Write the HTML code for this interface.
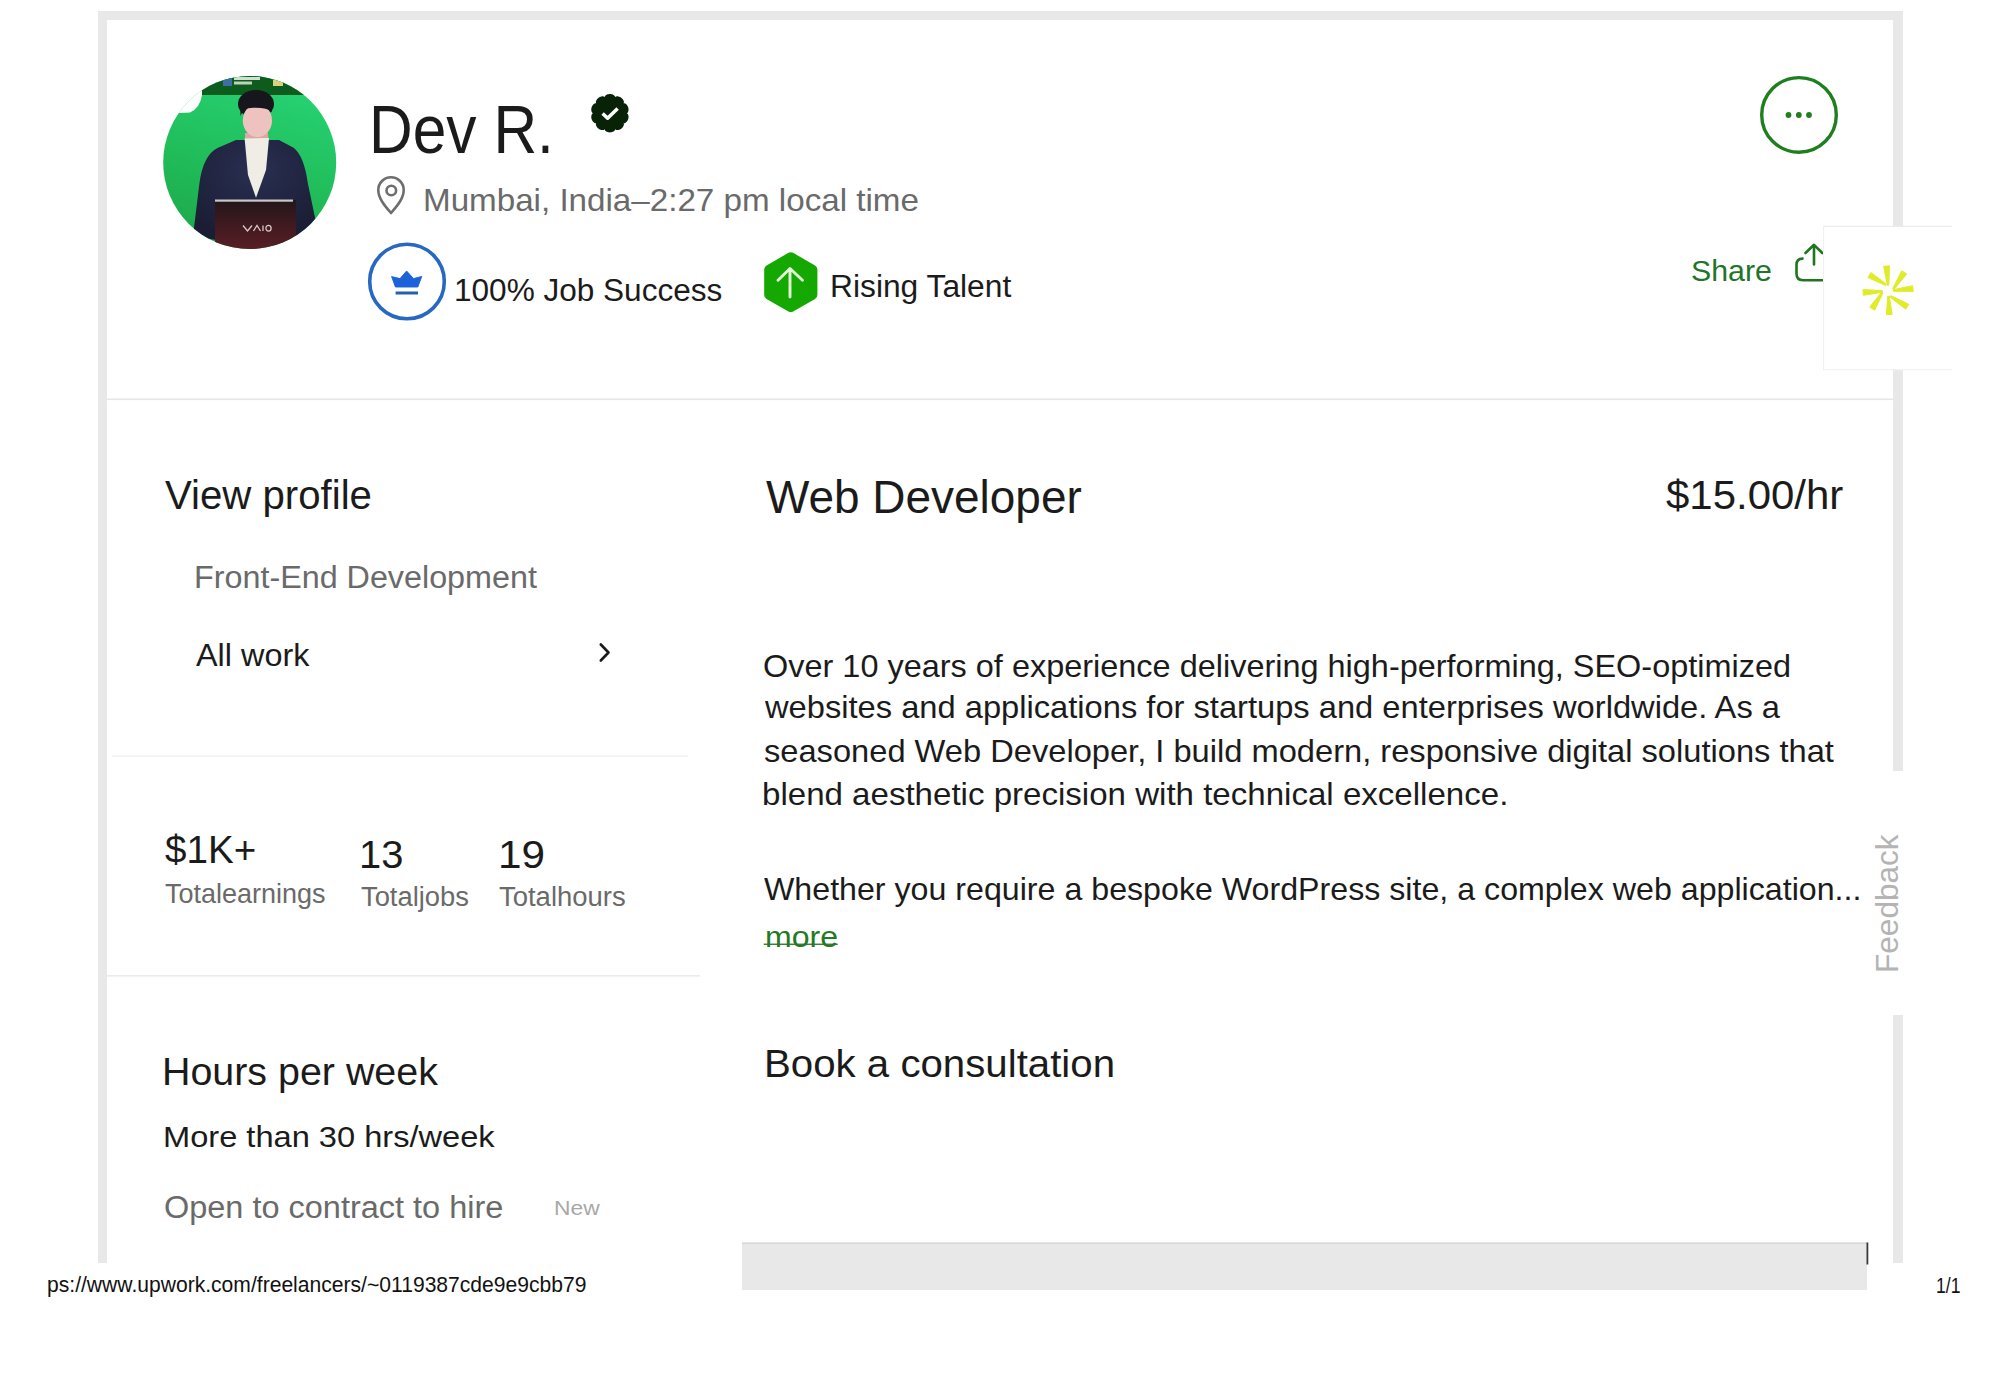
<!DOCTYPE html>
<html><head><meta charset="utf-8"><title>Dev R. - Upwork</title>
<style>
html,body{margin:0;padding:0;background:#fff;}
body{width:2000px;height:1380px;position:relative;overflow:hidden;font-family:"Liberation Sans",sans-serif;}
.t{position:absolute;white-space:pre;line-height:1;transform-origin:0 0;font-family:"Liberation Sans",sans-serif;}
svg.bg{position:absolute;left:0;top:0;}
</style></head><body>
<svg class="bg" width="2000" height="1380" viewBox="0 0 2000 1380">
<defs>
<clipPath id="av"><circle cx="249.7" cy="162.5" r="86.5"/></clipPath>
<linearGradient id="gg" x1="0.3" y1="0" x2="0" y2="1"><stop offset="0" stop-color="#26d070"/><stop offset="0.5" stop-color="#20bb58"/><stop offset="1" stop-color="#1ca248"/></linearGradient>
<linearGradient id="lap" x1="0" y1="0" x2="0" y2="1"><stop offset="0" stop-color="#23161a"/><stop offset="1" stop-color="#5c1f26"/></linearGradient>
<radialGradient id="suit" cx="0.5" cy="0.3" r="0.7"><stop offset="0" stop-color="#2a2f52"/><stop offset="1" stop-color="#1a1d34"/></radialGradient>
</defs>
<!-- frame -->
<rect x="98" y="11" width="1805" height="9" fill="#e8e8e8"/>
<rect x="98" y="11" width="9" height="1252" fill="#e8e8e8"/>
<rect x="1893" y="11" width="10" height="760" fill="#e8e8e8"/>
<rect x="1893" y="1015" width="10" height="248" fill="#e8e8e8"/>
<!-- dividers -->
<rect x="107" y="398.5" width="1786" height="1.6" fill="#e6e6e6"/>
<rect x="112" y="755.5" width="576" height="1.3" fill="#f0f0f0"/>
<rect x="107" y="975" width="593" height="1.6" fill="#ebebeb"/>
<!-- avatar -->
<g clip-path="url(#av)">
<rect x="160" y="70" width="180" height="185" fill="url(#gg)"/>
<path d="M202,95 L202,89 L219,78 L300,78 L312,95 Z" fill="#0d5c1e"/>
<rect x="160" y="70" width="180" height="8.5" fill="#0d5c1e"/>
<rect x="223" y="76" width="9" height="10" fill="#3d6ea6"/>
<rect x="234" y="77" width="26" height="3" fill="#cfe0cf"/>
<rect x="234" y="81.5" width="18" height="3" fill="#bcd2bc"/>
<rect x="273" y="79" width="10" height="7" fill="#d9d27c"/>
<path d="M158,68 L202,68 L202,95 Q200,108 190,112.5 L158,114 Z" fill="#fff"/>
<path d="M245,133 L268,133 L269,146 L245,146 Z" fill="#d9a9a2"/>
<ellipse cx="256" cy="104" rx="18" ry="14" fill="#17161d"/>
<ellipse cx="257.4" cy="120.5" rx="14.6" ry="16.5" fill="#eec3bf"/>
<path d="M240.5,116 Q242.5,107.5 254,107.8 Q267,107.5 271.8,112 L272.5,100 L240,100 Z" fill="#17161d"/>
<path d="M236,140 L218,147.8 Q203,155 199.4,183.6 L193,236 L216,240 L216,200.5 L293,200.5 L296,240 L318,232 L307.8,183 Q304,156 293.6,147.8 L279,140 Z" fill="url(#suit)"/>
<path d="M244.6,138.4 L269,138 L266,170 L256,197.8 L248,175 Z" fill="#efede6"/>
<rect x="215" y="200" width="81" height="52" fill="url(#lap)"/>
<rect x="215" y="199.5" width="78" height="2.2" fill="#c8c8c8"/>
<path d="M243,225.5 L247.5,231 L252,225.5 M253.5,231 L257,225.5 L260.5,231 M263,225.5 L263,231 M268.5,228.2 m-2.6,0 a2.6,2.9 0 1 0 5.2,0 a2.6,2.9 0 1 0 -5.2,0" stroke="#d8c8c8" stroke-width="1.3" fill="none"/>
</g>
<!-- verified badge -->
<path d="M626.90,113.20 L627.78,113.90 L628.14,114.64 L628.36,115.39 L628.49,116.14 L628.52,116.90 L628.48,117.66 L628.36,118.41 L628.16,119.13 L627.89,119.84 L627.55,120.51 L627.14,121.15 L626.67,121.74 L626.12,122.28 L625.50,122.76 L624.78,123.14 L623.65,123.19 L623.95,124.28 L623.81,125.08 L623.55,125.82 L623.21,126.51 L622.79,127.14 L622.31,127.73 L621.77,128.26 L621.19,128.73 L620.55,129.14 L619.88,129.49 L619.18,129.77 L618.44,129.97 L617.68,130.08 L616.90,130.10 L616.09,129.99 L615.15,129.37 L614.76,130.42 L614.17,130.99 L613.53,131.44 L612.84,131.79 L612.13,132.06 L611.40,132.25 L610.65,132.36 L609.90,132.40 L609.15,132.36 L608.40,132.25 L607.67,132.06 L606.96,131.79 L606.27,131.44 L605.63,130.99 L605.04,130.42 L604.65,129.37 L603.71,129.99 L602.90,130.10 L602.12,130.08 L601.36,129.97 L600.62,129.77 L599.92,129.49 L599.25,129.14 L598.61,128.73 L598.03,128.26 L597.49,127.73 L597.01,127.14 L596.59,126.51 L596.25,125.82 L595.99,125.08 L595.85,124.28 L596.15,123.19 L595.02,123.14 L594.30,122.76 L593.68,122.28 L593.13,121.74 L592.66,121.15 L592.25,120.51 L591.91,119.84 L591.64,119.13 L591.44,118.41 L591.32,117.66 L591.28,116.90 L591.31,116.14 L591.44,115.39 L591.66,114.64 L592.02,113.90 L592.90,113.20 L592.02,112.50 L591.66,111.76 L591.44,111.01 L591.31,110.26 L591.28,109.50 L591.32,108.74 L591.44,107.99 L591.64,107.27 L591.91,106.56 L592.25,105.89 L592.66,105.25 L593.13,104.66 L593.68,104.12 L594.30,103.64 L595.02,103.26 L596.15,103.21 L595.85,102.12 L595.99,101.32 L596.25,100.58 L596.59,99.89 L597.01,99.26 L597.49,98.67 L598.03,98.14 L598.61,97.67 L599.25,97.26 L599.92,96.91 L600.62,96.63 L601.36,96.43 L602.12,96.32 L602.90,96.30 L603.71,96.41 L604.65,97.03 L605.04,95.98 L605.63,95.41 L606.27,94.96 L606.96,94.61 L607.67,94.34 L608.40,94.15 L609.15,94.04 L609.90,94.00 L610.65,94.04 L611.40,94.15 L612.13,94.34 L612.84,94.61 L613.53,94.96 L614.17,95.41 L614.76,95.98 L615.15,97.03 L616.09,96.41 L616.90,96.30 L617.68,96.32 L618.44,96.43 L619.18,96.63 L619.88,96.91 L620.55,97.26 L621.19,97.67 L621.77,98.14 L622.31,98.67 L622.79,99.26 L623.21,99.89 L623.55,100.58 L623.81,101.32 L623.95,102.12 L623.65,103.21 L624.78,103.26 L625.50,103.64 L626.12,104.12 L626.67,104.66 L627.14,105.25 L627.55,105.89 L627.89,106.56 L628.16,107.27 L628.36,107.99 L628.48,108.74 L628.52,109.50 L628.49,110.26 L628.36,111.01 L628.14,111.76 L627.78,112.50 Z" fill="#072207"/>
<path d="M602.6,113.4 L607.6,118.2 L617.6,108.4" stroke="#fff" stroke-width="3.5" fill="none" stroke-linecap="butt" stroke-linejoin="round"/>
<!-- pin -->
<path d="M391,213 C384,205 378.3,198 378.3,190 A12.7,12.7 0 0 1 403.7,190 C403.7,198 398,205 391,213 Z" stroke="#6e6e6e" stroke-width="2.6" fill="none" stroke-linejoin="round"/>
<circle cx="391.3" cy="190.5" r="4.8" stroke="#6e6e6e" stroke-width="2.6" fill="none"/>
<!-- job success -->
<circle cx="407" cy="281.5" r="37.3" stroke="#2668c2" stroke-width="3.6" fill="none"/>
<path d="M391.6,276.6 L395.4,287 L417.8,287 L421.8,276.4 L413.6,278.6 L406.6,271 L400,278.6 Z" fill="#1c62d8" stroke="#1c62d8" stroke-width="0.9" stroke-linejoin="round"/>
<rect x="395.6" y="291.5" width="22.4" height="3" fill="#2160ac"/>
<!-- rising talent -->
<path d="M790.80,256.90 L812.71,269.55 L812.71,294.85 L790.80,307.50 L768.89,294.85 L768.89,269.55 Z" fill="#14a800" stroke="#14a800" stroke-width="9.4" stroke-linejoin="round"/>
<path d="M790,297 L790,269 M778,280.3 L790,268.5 L802.5,280.3" stroke="#e2f9d8" stroke-width="2.9" fill="none" stroke-linecap="round" stroke-linejoin="round"/>
<!-- more button -->
<circle cx="1799" cy="114.9" r="37.3" stroke="#1f7f1f" stroke-width="3.4" fill="none"/>
<circle cx="1788.5" cy="115" r="2.9" fill="#1f7f1f"/>
<circle cx="1798.8" cy="115" r="2.9" fill="#1f7f1f"/>
<circle cx="1809" cy="115" r="2.9" fill="#1f7f1f"/>
<!-- share icon -->
<path d="M1802.5,258.6 Q1796.5,258.6 1796.5,265 L1796.5,273.8 Q1796.5,280.2 1803,280.2 L1822.5,280.2" stroke="#1f761f" stroke-width="2.6" fill="none" stroke-linecap="round"/>
<path d="M1814,264.5 L1814,245.5 M1805.5,253 L1814,244.8 L1822.3,253" stroke="#1f761f" stroke-width="2.6" fill="none" stroke-linecap="round" stroke-linejoin="round"/>
<!-- popup -->
<rect x="1823" y="226" width="129" height="144" fill="#fff"/>
<rect x="1823" y="225.8" width="129" height="1.2" fill="#ececec"/>
<rect x="1823" y="226" width="1.2" height="144" fill="#f1f1f1"/>
<rect x="1823" y="369" width="129" height="1.2" fill="#f3f3f3"/>
<path d="M1889.47,265.86 L1883.69,266.30 L1887.23,285.18 L1888.83,285.06 Z M1870.92,272.58 L1868.00,277.59 L1885.67,285.48 L1886.48,284.10 Z M1863.03,289.51 L1863.31,295.30 L1882.42,292.27 L1882.34,290.67 Z M1869.72,307.09 L1874.63,310.17 L1883.06,292.80 L1881.70,291.95 Z M1886.44,314.62 L1892.23,314.35 L1889.30,296.26 L1887.70,296.34 Z M1905.69,309.23 L1908.75,304.31 L1890.81,295.62 L1889.96,296.98 Z M1913.21,291.46 L1912.64,285.69 L1893.22,289.70 L1893.38,291.30 Z M1906.67,273.97 L1901.82,270.80 L1892.64,288.68 L1893.98,289.56 Z" fill="#e0ec28" stroke="#e0ec28" stroke-width="1" stroke-linejoin="round"/>
<!-- chevron -->
<path d="M600.8,644.5 L608.5,652.5 L600.8,660.5" stroke="#1b1b1b" stroke-width="2.6" fill="none" stroke-linecap="round" stroke-linejoin="round"/>
<!-- bottom bar -->
<rect x="742" y="1242.5" width="1125" height="47.5" fill="#e8e8e8"/>
<rect x="742" y="1242.5" width="1125" height="1.5" fill="#d8d8d8"/>
<rect x="1866.5" y="1242.5" width="1.8" height="22" fill="#3a3a3a"/>
<!-- more underline -->
<rect x="763.75" y="943.6" width="74" height="1.3" fill="#2d6e2d"/>
</svg>
<div class="t" style="left:369.34px;top:96.20px;font-size:67.83px;color:#1b1b1b;transform:scaleX(0.8920);">Dev R.</div>
<div class="t" style="left:422.90px;top:184.50px;font-size:31.59px;color:#6a6a6a;transform:scaleX(1.0503);">Mumbai, India–2:27 pm local time</div>
<div class="t" style="left:453.93px;top:275.00px;font-size:30.43px;color:#1b1b1b;transform:scaleX(1.0369);">100% Job Success</div>
<div class="t" style="left:830.01px;top:271.00px;font-size:31.88px;color:#1b1b1b;transform:scaleX(0.9965);">Rising Talent</div>
<div class="t" style="left:1690.69px;top:256.40px;font-size:30.00px;color:#21742a;transform:scaleX(1.0093);">Share</div>
<div class="t" style="left:164.50px;top:475.75px;font-size:40.22px;color:#1b1b1b;transform:scaleX(0.9989);">View profile</div>
<div class="t" style="left:193.97px;top:562.00px;font-size:31.88px;color:#6a6a6a;transform:scaleX(1.0133);">Front-End Development</div>
<div class="t" style="left:196.00px;top:641.25px;font-size:30.80px;color:#1b1b1b;transform:scaleX(1.0521);">All work</div>
<div class="t" style="left:165.00px;top:830.50px;font-size:38.04px;color:#1b1b1b;transform:scaleX(1.0150);">$1K+</div>
<div class="t" style="left:358.96px;top:835.00px;font-size:39.13px;color:#1b1b1b;transform:scaleX(1.0182);">13</div>
<div class="t" style="left:497.84px;top:835.00px;font-size:39.13px;color:#1b1b1b;transform:scaleX(1.0815);">19</div>
<div class="t" style="left:164.50px;top:878.50px;font-size:28.26px;color:#6a6a6a;transform:scaleX(0.9559);">Totalearnings</div>
<div class="t" style="left:360.50px;top:883.50px;font-size:26.81px;color:#6a6a6a;transform:scaleX(1.0203);">Totaljobs</div>
<div class="t" style="left:498.75px;top:883.50px;font-size:26.81px;color:#6a6a6a;transform:scaleX(1.0245);">Totalhours</div>
<div class="t" style="left:162.48px;top:1051.50px;font-size:39.13px;color:#1b1b1b;transform:scaleX(1.0067);">Hours per week</div>
<div class="t" style="left:163.33px;top:1122.00px;font-size:30.07px;color:#1b1b1b;transform:scaleX(1.0845);">More than 30 hrs/week</div>
<div class="t" style="left:164.48px;top:1191.50px;font-size:31.88px;color:#6a6a6a;transform:scaleX(1.0185);">Open to contract to hire</div>
<div class="t" style="left:554.41px;top:1196.50px;font-size:21.01px;color:#a8a8a8;transform:scaleX(1.0874);">New</div>
<div class="t" style="left:765.75px;top:474.40px;font-size:46.96px;color:#1b1b1b;transform:scaleX(0.9782);">Web Developer</div>
<div class="t" style="left:1665.80px;top:474.60px;font-size:40.00px;color:#1b1b1b;transform:scaleX(1.0492);">$15.00/hr</div>
<div class="t" style="left:763.36px;top:650.50px;font-size:31.16px;color:#1b1b1b;transform:scaleX(1.0415);">Over 10 years of experience delivering high-performing, SEO-optimized</div>
<div class="t" style="left:765.45px;top:692.10px;font-size:31.16px;color:#1b1b1b;transform:scaleX(1.0484);">websites and applications for startups and enterprises worldwide. As a</div>
<div class="t" style="left:764.40px;top:735.80px;font-size:31.16px;color:#1b1b1b;transform:scaleX(1.0476);">seasoned Web Developer, I build modern, responsive digital solutions that</div>
<div class="t" style="left:762.28px;top:779.40px;font-size:31.16px;color:#1b1b1b;transform:scaleX(1.0614);">blend aesthetic precision with technical excellence.</div>
<div class="t" style="left:764.40px;top:873.80px;font-size:31.16px;color:#1b1b1b;transform:scaleX(1.0326);">Whether you require a bespoke WordPress site, a complex web application...</div>
<div class="t" style="left:764.68px;top:921.80px;font-size:29.86px;color:#237a23;transform:scaleX(1.0731);">more</div>
<div class="t" style="left:763.56px;top:1044.50px;font-size:38.41px;color:#1b1b1b;transform:scaleX(1.0472);">Book a consultation</div>
<div class="t" style="left:46.58px;top:1273.30px;font-size:22.90px;color:#111;transform:scaleX(0.9213);">ps://www.upwork.com/freelancers/~0119387cde9e9cbb79</div>
<div class="t" style="left:1936.22px;top:1274.60px;font-size:22.61px;color:#111;transform:scaleX(0.7774);">1/1</div>
<div class="t" style="left:1872.20px;top:973.33px;font-size:31.16px;color:#b4b4b4;transform:rotate(-90deg) scaleX(1.0134);">Feedback</div>
</body></html>
